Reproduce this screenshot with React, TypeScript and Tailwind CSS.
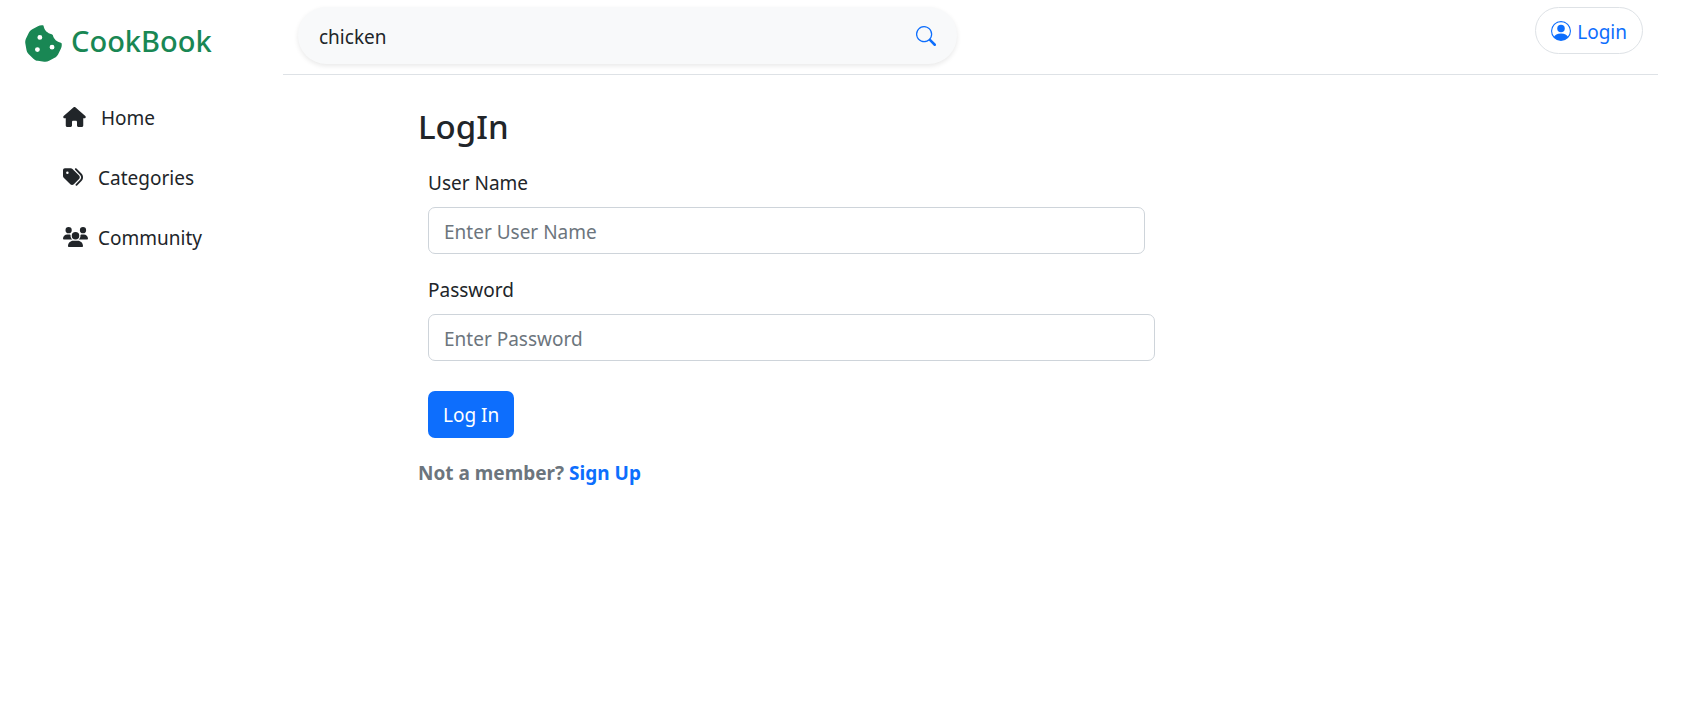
import { FaCookieBite, FaHouse, FaTags, FaUsers } from "react-icons/fa6";
import { BsPersonCircle, BsSearch } from "react-icons/bs";

const links = [
  { label: "Home", Icon: FaHouse, icon: "w-[23px] h-5", gap: "gap-[15px]" },
  { label: "Categories", Icon: FaTags, icon: "w-5 h-5", gap: "gap-[15px]" },
  { label: "Community", Icon: FaUsers, icon: "w-[25px] h-5", gap: "gap-2.5" },
];

const field =
  "block h-[47px] w-full rounded-[7px] border border-[#ced4da] bg-white px-[15px] pt-0.5 text-[#212529] placeholder:text-[#6c757d] placeholder:opacity-100 focus:outline-2 focus:outline-[#86b7fe]";

function Sidebar() {
  return (
    <aside className="w-[283px] shrink-0 pt-5 pl-6">
      <a href="#" className="flex items-start gap-2 text-[#198754]">
        <FaCookieBite className="mt-1 size-[39px]" />
        <span className="text-[29px] leading-[42px] font-medium">CookBook</span>
      </a>
      <nav className="mt-6 ml-[39px]">
        <ul>
          {links.map(({ label, Icon, icon, gap }) => (
            <li key={label}>
              <a href="#" className={`flex h-[60px] items-center ${gap}`}>
                <Icon className={icon} />
                <span className="pt-0.5">{label}</span>
              </a>
            </li>
          ))}
        </ul>
      </nav>
    </aside>
  );
}

function TopBar() {
  return (
    <header className="flex items-start justify-between border-b border-[#dee2e6] px-[15px] pt-[7px] pb-[10px]">
      <form
        role="search"
        onSubmit={(e) => e.preventDefault()}
        className="flex h-[57px] w-[49%] items-center rounded-full bg-[#f8f9fa] px-[21px] shadow-[0_2px_5px_rgba(0,0,0,0.09)]"
      >
        <input
          type="search"
          aria-label="Search recipes"
          defaultValue="chicken"
          className="min-w-0 grow bg-transparent pt-[3px] outline-none"
        />
        <button type="submit" aria-label="Search" className="text-[#0d6efd]">
          <BsSearch className="size-5" />
        </button>
      </form>
      <button
        type="button"
        className="flex h-[47px] items-center gap-1.5 rounded-full border border-[#dee2e6] px-[15px] text-[#0d6efd]"
      >
        <BsPersonCircle className="size-5" />
        <span className="pt-[3px]">Login</span>
      </button>
    </header>
  );
}

function LoginForm() {
  return (
    <main className="mt-[31px] ml-[135px] w-[54.3%]">
      <h1 className="text-[33px] leading-[42px] font-medium">LogIn</h1>
      <form onSubmit={(e) => e.preventDefault()} className="mt-5 px-2.5">
        <label htmlFor="username" className="mb-[9px] block leading-[30px]">
          User Name
        </label>
        <div className="pr-2.5">
          <input id="username" type="text" placeholder="Enter User Name" className={field} />
        </div>
        <label htmlFor="password" className="mt-[21px] mb-[9px] block leading-[30px]">
          Password
        </label>
        <input id="password" type="password" placeholder="Enter Password" className={field} />
        <button type="submit" className="mt-[30px] block h-[47px] rounded-[7px] bg-[#0d6efd] px-[15px] pt-0.5 text-white">
          Log In
        </button>
      </form>
      <p className="mt-5 leading-[30px] font-bold text-[#6c757d]">
        Not a member?{" "}
        <a href="#" className="text-[#0d6efd]">
          Sign Up
        </a>
      </p>
    </main>
  );
}

export default function App() {
  return (
    <div className="flex min-h-screen bg-white pr-[38px] font-['Noto_Sans',sans-serif] text-[19px] text-[#212529]">
      <Sidebar />
      <div className="min-w-0 grow">
        <TopBar />
        <LoginForm />
      </div>
    </div>
  );
}
